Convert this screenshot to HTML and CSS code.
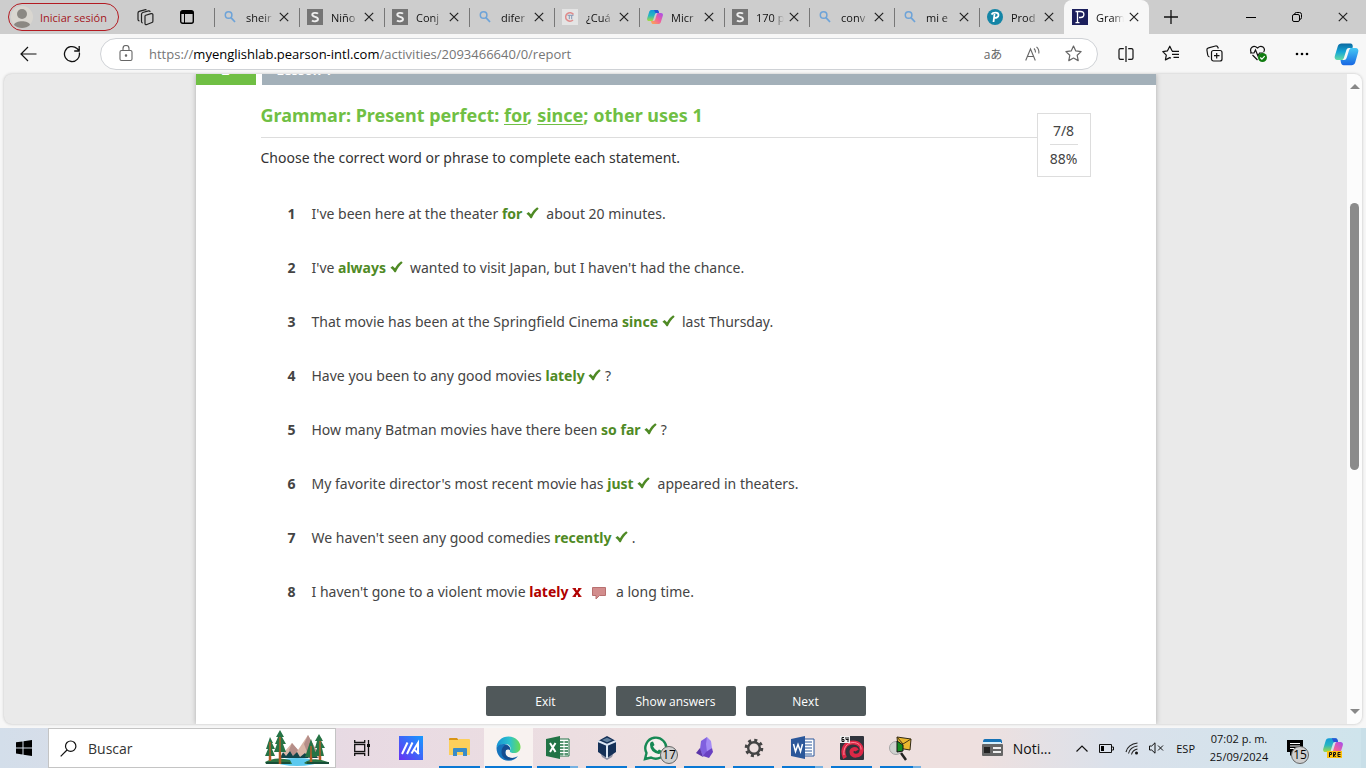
FILE: index.html
```html
<!DOCTYPE html>
<html lang="es">
<head>
<meta charset="utf-8">
<title>Grammar: Present perfect</title>
<link rel="stylesheet" href="styles.css">
</head>
<body>
<svg class="defs" aria-hidden="true">
  <symbol id="close" viewBox="0 0 10 10"><path d="M.8.8l8.4 8.4M9.2.8L.8 9.2" fill="none" stroke="#222" stroke-width="1.2"/></symbol>
  <symbol id="lens" viewBox="0 0 16 16"><circle cx="6.6" cy="6" r="3.3" fill="none" stroke="#6da3d8" stroke-width="1.5"/><path d="M9 8.6l4 4.4" stroke="#6da3d8" stroke-width="1.7"/></symbol>
  <symbol id="sbox" viewBox="0 0 16 16"><path d="M0 0h16v16H0z" fill="#757575"/><path d="M11 4.7C10 3.7 5.3 3.2 5.3 5.7 5.3 8.4 11 7.3 11 10.1 11 12.9 6.300 12.700 5 11.500" fill="none" stroke="#eee" stroke-width="1.9"/></symbol>
  <symbol id="check" viewBox="0 0 13 12"><path d="M.4 6.800L2.600 4.900 5 7.200C6.500 4.300 8.700 1.900 11.200.2L12.700 1.700C9.700 4.300 7.500 7.500 5.800 11.200H4.500C3.500 9.500 2.100 7.900.4 6.800z" fill="#4f8a25"/></symbol>
  <linearGradient id="cb" x1="0" y1="0" x2="0" y2="1"><stop offset="0" stop-color="#129bd8"/><stop offset=".5" stop-color="#27b5c2"/><stop offset="1" stop-color="#a8dc3d"/></linearGradient>
  <linearGradient id="cp" x1="1" y1="0" x2="0" y2="1"><stop offset="0" stop-color="#a44cf1"/><stop offset=".5" stop-color="#f0619a"/><stop offset="1" stop-color="#ffae4b"/></linearGradient>
  <symbol id="copilot" viewBox="0 0 16 16"><path d="M4.700 1h5.200c1.100 0 1.400.6 1.800 1.800L12 4H9.700C8.300 4 8 5 7.600 6.300L6.300 10.500C5.900 11.700 5.500 12 4.500 12H2C.4 12-.2 10.800.2 9.300L2.200 2.800C2.600 1.600 3.500 1 4.700 1z" fill="url(#cb)"/><path d="M7 1h3c1.100 0 1.400.6 1.800 1.800L12 4H8.500z" fill="#2855d6"/><path d="M11.300 15H6.100c-1.100 0-1.400-.6-1.800-1.800L4 12h2.300c1.400 0 1.700-1 2.100-2.300L9.700 5.500C10.100 4.300 10.500 4 11.500 4H14c1.600 0 2.200 1.200 1.800 2.700l-2 6.500c-.4 1.200-1.300 1.800-2.500 1.800z" fill="url(#cp)"/></symbol>
</svg>

<header class="tabstrip">
  <button class="signin">
    <svg width="24" height="24" viewBox="0 0 24 24"><circle cx="12" cy="12" r="11" fill="#d9d6d0"/><circle cx="12" cy="9" r="5" fill="#8b8883"/><path d="M4 20c1-5 15-5 16 0-4 4-12 4-16 0z" fill="#8b8883"/></svg>
    <span>Iniciar sesión</span>
  </button>
  <button class="ghost strip-btn" aria-label="Áreas de trabajo"><svg width="17" height="17" viewBox="0 0 17 17" fill="none" stroke="#222" stroke-width="1.200"><path d="M8 6.500l6-1.800q1.700-.4 1.900 1v6.500q0 1-1 1.300l-5 2q-1.900.6-1.900-1V6.500"/><path d="M5.800 14Q4.500 14 4.500 12.500V5.200Q4.500 4 5.800 3.500L11.500 1.900q1.500-.3 1.500 1.200"/><path d="M2.500 12Q1 11.800 1 10.500V4Q1 2.800 2.200 2.400L7.700.8Q9 .500 9.300 1.300"/></svg></button>
  <button class="ghost strip-btn second" aria-label="Pestañas verticales"><svg width="14" height="14" viewBox="0 0 14 14"><rect x=".7" y=".7" width="12.600" height="12.600" rx="2" fill="none" stroke="#000" stroke-width="1.400"/><path d="M1 1h12v3H1zM4 3h1v10H4z"/></svg></button>
  <nav class="tabs">
    <div class="tab"><svg class="fav"><use href="#lens"/></svg><a href="#">sheir</a><button aria-label="Cerrar"><svg><use href="#close"/></svg></button></div>
    <div class="tab"><svg class="fav"><use href="#sbox"/></svg><a href="#">Niño</a><button aria-label="Cerrar"><svg><use href="#close"/></svg></button></div>
    <div class="tab"><svg class="fav"><use href="#sbox"/></svg><a href="#">Conj</a><button aria-label="Cerrar"><svg><use href="#close"/></svg></button></div>
    <div class="tab"><svg class="fav"><use href="#lens"/></svg><a href="#">difer</a><button aria-label="Cerrar"><svg><use href="#close"/></svg></button></div>
    <div class="tab"><svg class="fav" viewBox="0 0 16 16"><path d="M0 0h16v16H0z" fill="#e4e4e4"/><path d="M11.500 5.500A4.300 4.300 0 1 0 11 11" fill="none" stroke="#df8a8a" stroke-width="1.500"/><path d="M5.500 6.300h6M7.300 6.500v3.700M9.700 6.500v3.700" stroke="#8497b5"/></svg><a href="#">¿Cuá</a><button aria-label="Cerrar"><svg><use href="#close"/></svg></button></div>
    <div class="tab"><svg class="fav"><use href="#copilot"/></svg><a href="#">Micr</a><button aria-label="Cerrar"><svg><use href="#close"/></svg></button></div>
    <div class="tab"><svg class="fav"><use href="#sbox"/></svg><a href="#">170 p</a><button aria-label="Cerrar"><svg><use href="#close"/></svg></button></div>
    <div class="tab"><svg class="fav"><use href="#lens"/></svg><a href="#">conv</a><button aria-label="Cerrar"><svg><use href="#close"/></svg></button></div>
    <div class="tab"><svg class="fav"><use href="#lens"/></svg><a href="#">mi e</a><button aria-label="Cerrar"><svg><use href="#close"/></svg></button></div>
    <div class="tab"><svg class="fav" viewBox="0 0 16 16"><circle cx="8" cy="8" r="8" fill="#1485a6"/><path d="M6.500 13l1-8M4.500 5.500C6 3 11.500 2.700 11.500 6c0 2.300-2.500 3.200-4.500 2.700" fill="none" stroke="#fff" stroke-width="1.800"/></svg><a href="#">Prod</a><button aria-label="Cerrar"><svg><use href="#close"/></svg></button></div>
    <div class="tab active"><svg class="fav" viewBox="0 0 16 16"><path d="M0 0h16v16H0z" fill="#1c1f5c"/><path d="M5.500 2v12M3.500 2.500h5c4.500 0 4.500 6 0 6H7M3.500 13.700h4" fill="none" stroke="#fff" stroke-width="1.300"/></svg><a href="#">Gram</a><button aria-label="Cerrar"><svg><use href="#close"/></svg></button></div>
  </nav>
  <button class="ghost newtab" aria-label="Nueva pestaña"><svg width="14" height="14"><path d="M7 0v14M0 7h14" stroke="#111" stroke-width="1.300"/></svg></button>
  <div class="winctl">
    <button class="ghost" aria-label="Minimizar"><svg width="10" height="10"><path d="M0 5.500h10" stroke="#000"/></svg></button>
    <button class="ghost" aria-label="Restaurar"><svg width="10" height="10" fill="none" stroke="#000"><rect x=".5" y="2.500" width="7" height="7" rx="1.500"/><path d="M2.500 2.300Q2.700.5 4.500.5H7.500Q9.500.5 9.500 2.500V5.500Q9.500 7.300 7.700 7.500"/></svg></button>
    <button class="ghost" aria-label="Cerrar ventana"><svg width="10" height="10"><use href="#close"/></svg></button>
  </div>
</header>

<div class="toolbar">
  <button class="ghost tool" aria-label="Atrás"><svg width="17" height="16" fill="none" stroke="#111" stroke-width="1.200"><path d="M1 8h15.500M8 1L1 8l7 7"/></svg></button>
  <button class="ghost tool" aria-label="Actualizar"><svg width="18" height="18" fill="none" stroke="#111" stroke-width="1.300"><path d="M16.300 7.500A7.500 7.500 0 1 1 14 3.500l2 2M16.200 1v5h-5"/></svg></button>
  <div class="address">
    <svg width="14" height="17" viewBox="0 0 14 17" fill="none" stroke="#666" stroke-width="1.100"><rect x="1" y="5.500" width="12" height="10" rx="1.500"/><path d="M4 5.500V3.500a3 3 0 0 1 6 0v2"/><circle cx="7" cy="10.500" r=".7" fill="#444"/></svg>
    <div class="url" role="textbox" contenteditable="true" aria-label="Dirección" spellcheck="false">https://<b>myenglishlab.pearson-intl.com</b>/activities/2093466640/0/report</div>
    <button class="ghost inner" aria-label="Traducir"><span class="translate">aあ</span></button>
    <button class="ghost inner" aria-label="Leer en voz alta"><svg width="16" height="16" fill="none" stroke="#666" stroke-width="1.100"><path d="M.7 14.500L5.500 3l4.800 11.500M2.300 10.500h6.300M9 2.500q1.600 1.500 1.500 4M11.500.8q3 2.700 2.300 6.700"/></svg></button>
    <button class="ghost inner" aria-label="Favorito"><svg width="17" height="17" viewBox="0 0 17 17" fill="none" stroke="#666" stroke-width="1.200" stroke-linejoin="round"><path d="M8.500 1l2.300 4.900 5.300.7-3.900 3.700 1 5.300-4.700-2.600-4.700 2.600 1-5.300L.9 6.600l5.300-.7z"/></svg></button>
  </div>
  <div class="extras">
    <button class="ghost" aria-label="Pantalla dividida"><svg width="16" height="16" fill="none" stroke="#111" stroke-width="1.200"><path d="M8 0v16M5.800 2.600H2.600Q1 2.600 1 4v8q0 1.400 1.600 1.400h3.200M10.200 2.600h3.200Q15 2.600 15 4v8q0 1.400-1.600 1.400h-3.200"/></svg></button>
    <button class="ghost" aria-label="Favoritos"><svg width="17" height="17" fill="none" stroke="#111" stroke-width="1.200" stroke-linejoin="round"><path d="M10.500 6L10 5.700 7.800 1.200 5.500 5.800.8 6.600l3.500 3.500-.9 4.800 4.400-2.300 1.100.6M10 6.300h7M10 9.300h7M11.500 12.300H17"/></svg></button>
    <button class="ghost" aria-label="Colecciones"><svg width="17" height="17" fill="none" stroke="#111" stroke-width="1.200"><rect x="5.500" y="5.500" width="10.500" height="10.500" rx="2"/><path d="M10.700 8v5.500M8 10.700h5.500M3.500 12Q2 11.600 1.700 10L.9 5Q.7 3.200 2.500 2.800L9.500 1Q11.300.7 12 2.500l.3 1"/></svg></button>
    <button class="ghost" aria-label="Rendimiento"><svg width="19" height="18" fill="none" stroke="#111" stroke-width="1.200"><path d="M2.400 8C-.2 3 4.500-.800 8.500 3 12.500-.8 17 3 14.700 7M1 8h4l1.500-3 2.500 6 1.500-3h4M3.500 10l5 5"/><circle cx="13.500" cy="12.500" r="4.500" fill="#107c10" stroke="none"/><path d="M11.300 12.500l1.600 1.700 2.800-3" stroke="#fff"/></svg></button>
    <button class="ghost" aria-label="Más"><svg width="14" height="4"><circle cx="2" cy="2" r="1.300"/><circle cx="7" cy="2" r="1.300"/><circle cx="12" cy="2" r="1.300"/></svg></button>
    <button class="ghost" aria-label="Copilot"><svg width="25" height="24" viewBox="0 0 16 16"><linearGradient id="ba" x1="0" y1="0" x2="0" y2="1"><stop offset="0" stop-color="#0a68a0"/><stop offset=".5" stop-color="#15a5d6"/><stop offset="1" stop-color="#66dba5"/></linearGradient><linearGradient id="bb" x1="0" y1="0" x2="0" y2="1"><stop offset="0" stop-color="#45c8f4"/><stop offset="1" stop-color="#1766e3"/></linearGradient><path d="M4.700 1h6c1 0 1.300.6 1.500 1.800L12 4H9.700C8.300 4 8 5 7.600 6.300L6.300 10.500C5.900 11.700 5.500 12 4.500 12H2C.4 12-.2 10.800.2 9.300L2.200 2.800C2.600 1.600 3.500 1 4.700 1z" fill="url(#ba)"/><path d="M11.300 15.500H6.100c-1.100 0-1.400-.6-1.800-1.800L4 12h2.300c1.400 0 1.700-1 2.100-2.300L9.700 5.500C10.100 4.300 10.500 4 11.500 4H14c1.600 0 2.200 1.200 1.800 2.700l-2 7c-.4 1.200-1.300 1.800-2.500 1.800z" fill="url(#bb)"/></svg></button>
  </div>
</div>

<div class="viewport">
  <div class="canvas">
    <main class="paper">
      <div class="banner"><span class="unit">2</span><span class="lesson">Lesson 1</span></div>
      <div class="content">
        <div class="title-row">
          <div class="title-text">
            <h1>Grammar: Present perfect: <u>for</u>, <u>since</u>; other uses 1</h1>
            <p class="instructions">Choose the correct word or phrase to complete each statement.</p>
          </div>
          <div class="score"><span>7/8</span><hr><span>88%</span></div>
        </div>
        <ol class="questions">
          <li><b class="num">1</b><p>I've been here at the theater <strong>for</strong> <svg class="tick"><use href="#check"/></svg>&nbsp; about 20 minutes.</p></li>
          <li><b class="num">2</b><p>I've <strong>always</strong> <svg class="tick"><use href="#check"/></svg>&nbsp; wanted to visit Japan, but I haven't had the chance.</p></li>
          <li><b class="num">3</b><p>That movie has been at the Springfield Cinema <strong>since</strong> <svg class="tick"><use href="#check"/></svg>&nbsp; last Thursday.</p></li>
          <li><b class="num">4</b><p>Have you been to any good movies <strong>lately</strong> <svg class="tick"><use href="#check"/></svg> ?</p></li>
          <li><b class="num">5</b><p>How many Batman movies have there been <strong>so far</strong> <svg class="tick"><use href="#check"/></svg> ?</p></li>
          <li><b class="num">6</b><p>My favorite director's most recent movie has <strong>just</strong> <svg class="tick"><use href="#check"/></svg>&nbsp; appeared in theaters.</p></li>
          <li><b class="num">7</b><p>We haven't seen any good comedies <strong>recently</strong> <svg class="tick"><use href="#check"/></svg> .</p></li>
          <li><b class="num">8</b><p>I haven't gone to a violent movie <strong class="wrong">lately</strong> <svg class="cross" viewBox="0 0 10 9"><path d="M2 .5l6 8M8 .5l-6 8" stroke="#b00000" stroke-width="2.200"/><path d="M.5.600H4M6 .6h3.500M.5 8.400H4M6 8.400h3.500" stroke="#b00000"/></svg> <svg class="note" viewBox="0 0 14 14"><path d="M.5 1.500h13v8H7.500L4 13V9.500H.5z" fill="#d28d8d" stroke="#b87070"/></svg>&nbsp; a long time.</p></li>
        </ol>
        <div class="actions"><button>Exit</button><button>Show answers</button><button>Next</button></div>
      </div>
    </main>
  </div>
  <div class="scrollbar" aria-hidden="true"><i class="up"></i><span class="before"></span><span class="thumb"></span><span class="after"></span><i class="down"></i></div>
</div>

<footer class="taskbar">
  <button class="ghost start" aria-label="Inicio"><svg width="16" height="16"><path d="M0 2.300l6.500-.9v6H0zM7.500 1.200L16 0v7.400H7.500zM0 8.500h6.500v6L0 13.600zM7.500 8.500H16V16l-8.500-1.200z"/></svg></button>
  <label class="search">
    <svg width="17" height="17" fill="none" stroke="#111" stroke-width="1.200"><circle cx="10.700" cy="6.200" r="5.200"/><path d="M7 10l-6.300 6.300"/></svg>
    <input type="text" placeholder="Buscar" aria-label="Buscar">
    <svg width="66" height="36" viewBox="0 0 66 36">
      <path d="M15 28L28 13l6 7 10-15 12 23z" fill="#d9b6a8"/><path d="M28 13l6 7-4 7-5-7zM44 5l10 18-8-4-3 3-3-8z" fill="#b58e89"/>
      <path d="M16 28l3-6 3 4 4-5 3 5 4-4 3 5 5-4 4 5 4-6 5 6z" fill="#12454b"/>
      <ellipse cx="33" cy="32" rx="20" ry="4" fill="#5bc9ef"/><path d="M1 32q10-6 25-2l2 4H2zM40 33q9-7 24-1l1 2H42z" fill="#2c7342"/><path d="M2 33h24M43 33h22" stroke="#174e38" stroke-width="2"/>
      <path d="M6 12v19M16 4v30M47 13v19M56 8v22" stroke="#b75b25" stroke-width="2.500"/>
      <path d="M6 7l3 6H8l3 6H8l3 7H1l3-7H2l2-6zM16 0l4 7h-2l4 7h-3l3 8H10l3-8h-2l3-7h-2zM47 9l6 18h-5l-1-4-1 4h-5zM55 4l4 7h-2l4 7h-3l2 8H50l3-8h-2l2-7h-2z" fill="#257345"/><path d="M6 12v19M16 7v27M47 16v16M56 11v19" stroke="#b75b25" stroke-width="1.400"/>
    </svg>
  </label>
  <nav class="apps">
    <button class="ghost" aria-label="Vista de tareas"><svg width="16" height="16" fill="none" stroke="#111" stroke-width="1.300"><path d="M.7 0v2.500h10V0M.7 16v-2.500h10V16M14.500 0v16"/><rect x=".7" y="4.500" width="10" height="7"/><path d="M13 4h3v3h-3z" fill="#111" stroke="none"/></svg></button>
    <button class="ghost" aria-label="MyASUS"><svg width="24" height="24"><linearGradient id="as" x1="0" y1="1" x2="1" y2="0"><stop offset="0" stop-color="#6830f2"/><stop offset="1" stop-color="#159aff"/></linearGradient><path d="M0 0h24v24H0z" fill="url(#as)"/><path d="M3 18L8.500 6.500M8 18l5.500-11.500M12.500 17.500L19 7v11M15.500 14l4.500 4" stroke="#fff" stroke-width="2" fill="none"/></svg></button>
    <button class="ghost open" aria-label="Explorador"><svg width="22" height="20"><path d="M0 1q0-1 1-1h7l2 2.500H0z" fill="#d99414"/><path d="M0 2h9l1-1h10q1 0 1 1v15H0z" fill="#fccf5b"/><path d="M4 18v-7q0-1 1-1h12q1 0 1 1v7h-4v-4H8v4z" fill="#398bc8"/></svg></button>
    <button class="ghost open current" aria-label="Edge"><svg width="25" height="25" viewBox="0 0 25 25"><linearGradient id="eg"><stop offset="0" stop-color="#1594d6"/><stop offset=".55" stop-color="#2cc2cd"/><stop offset="1" stop-color="#6bdc4f"/></linearGradient><path d="M.5 12C.5 5 6 .5 12.500.5 20 .5 24.500 6 24.500 11c0 4-3 6-6.500 6-3 0-5-1-4-3 1.500-3-.5-6-5-6-4 0-7 2-8.500 4z" fill="url(#eg)"/><path d="M.5 12C2 9 5 7.500 8.500 8c4 .500 6 3 5.500 6-3-2-6 1-4 5 2 3.500 8 4 12 1-2 3-5.500 4.700-9.500 4.700C5.500 24.700.5 19 .5 12z" fill="#1674bd"/><path d="M9 9c-4 3-5 9-1 13 3 3 9 2 13-1-4 2-9 1-11-2-2-4 1-7 4-5 .5-3-2-5-5-5z" fill="#154d91"/></svg></button>
    <button class="ghost open multi" aria-label="Excel"><svg width="24" height="24"><path d="M12 3h11v17H12z" fill="#fff" stroke="#217346"/><path d="M14 6h8M14 9h8M14 12h8M14 15h8M14 18h8" stroke="#217346" stroke-width="1.500"/><path d="M18 4v16" stroke="#fff"/><path d="M0 3l14-3v23L0 20z" fill="#217346"/><path d="M4 7l5.500 9M9.500 7L4 16" stroke="#fff" stroke-width="2"/></svg></button>
    <button class="ghost open" aria-label="VirtualBox"><svg width="22" height="24"><path d="M4 16h14l-2 5-5 3-5-3z" fill="#8e93a5"/><path d="M11 0l9 5v11l-9 6-9-6V5z" fill="#153158"/><path d="M2 5l9 4 9-4M11 9v13" stroke="#dce7f5" stroke-width="2" fill="none"/><path d="M6 4l5-2.300L16 4l-5 2.300z" fill="#62819f"/></svg></button>
    <button class="ghost open" aria-label="WhatsApp"><svg width="25" height="25" viewBox="0 0 25 25"><path d="M2 23l1.500-6A10.500 10.500 0 1 1 8 21.500z" fill="#f5efed" stroke="#168954" stroke-width="2.400"/><path d="M8 6l2-.5L11.500 9 10 10.500q1.500 3 4.500 4.500l1.500-1.500 3 1.500q-.500 3-3.500 3Q7 16 7 8.500q0-2 1-2.500z" fill="#168954"/></svg><span class="badge">17</span></button>
    <button class="ghost open" aria-label="Obsidian"><svg width="18" height="22"><path d="M11 0l4 4 1 7-5 5-4-5z" fill="#a48bf5"/><path d="M11 0L5 4 4 12l3 8 4-5-1-8z" fill="#8060df"/><path d="M4 11L0 16l7 4z" fill="#5b35a8"/><path d="M10 15l6-4 1 4-4 6-6-2z" fill="#6940c2"/></svg></button>
    <button class="ghost open" aria-label="Configuración"><svg width="20" height="20"><circle cx="10" cy="10" r="5.800" fill="none" stroke="#444" stroke-width="2.400"/><circle cx="10" cy="10" r="7.800" fill="none" stroke="#444" stroke-width="3" stroke-dasharray="3 3.126"/></svg></button>
    <button class="ghost open multi" aria-label="Word"><svg width="24" height="24"><path d="M12 3h11v17H12z" fill="#fff" stroke="#2b579a"/><path d="M14 6h7M14 9h7M14 12h7M14 15h7M14 18h7" stroke="#2b579a"/><path d="M0 3l14-3v23L0 20z" fill="#2b579a"/><path d="M2.500 8l2 7.500L7 8.500l2.500 7L11.500 8" stroke="#fff" stroke-width="1.500" fill="none"/></svg></button>
    <button class="ghost open" aria-label="Aplicación de 64 bits"><svg width="24" height="24"><rect width="24" height="24" rx="1" fill="#30343c"/><path d="M5 22C1 14 5 6.500 13 6.500c6 0 9.500 4 8.500 8.500-1 6-10 6-10 1 0-3 4-4 5.500-1.500" fill="none" stroke="#dc2846" stroke-width="4"/><path d="M4 19C3 12 7 6.500 13 6.500c5 0 8.500 3 8 7" fill="none" stroke="#ff8799"/><path d="M0 0h10v7H0z" fill="#eee"/><path d="M4 1.500H2v4h2v-2H2M6 1v2.500h2.500M8 1v5" fill="none" stroke="#111"/></svg></button>
    <button class="ghost open multi" aria-label="Buscador"><svg width="24" height="25"><path d="M8 1l14 2-1 11-12-2z" fill="#e9b72f" stroke="#322b15"/><path d="M8 1l6 7 8-5" fill="none" stroke="#453714"/><circle cx="7" cy="12" r="6.500" fill="#cfd2cf" stroke="#a5a5a5"/><path d="M8 5l6 4v6l-6 1z" fill="#168c22" stroke="#111"/><path d="M12 17l5 7" stroke="#222" stroke-width="2.500"/></svg></button>
  </nav>
  <button class="ghost news"><svg width="22" height="18"><path d="M3 0h15q2 0 2 3v1H1V3q0-3 2-3z" fill="#1672b5"/><path d="M1 3h18v2H1z" fill="#d4effc"/><rect y="5" width="21" height="12" rx="1" fill="#666"/><path d="M2 8h6v6H2z" fill="#222"/><path d="M11 9h8M11 13h8" stroke="#eee" stroke-width="2"/></svg><span>Noti...</span></button>
  <div class="tray">
    <svg width="12" height="7"><path d="M.5 6.500L6 1l5.500 5.500" fill="none" stroke="#111" stroke-width="1.200"/></svg>
    <svg width="15" height="9"><path d="M.5.5h12v8H.5zM13 3h1.500v3H13" fill="none" stroke="#111"/><path d="M2 2h3v5H2z"/></svg>
    <svg width="13" height="13" fill="none" stroke="#222" stroke-width="1.100"><path d="M1 10Q3 2 12.500 1M3.500 11.500Q5 5 12.500 4M6.500 12.500Q7.500 8 12.500 7"/><circle cx="11.500" cy="11" r="1.500" fill="#111" stroke="none"/></svg>
    <svg width="15" height="12" fill="none" stroke="#111"><path d="M.5 4h2.200L6 .8v10.400L2.700 8H.5zM9 3.500l5 5M14 3.500l-5 5"/></svg>
  </div>
  <span class="lang">ESP</span>
  <time class="clock"><span>07:02 p. m.</span><span>25/09/2024</span></time>
  <button class="ghost notif" aria-label="Notificaciones"><svg width="16" height="16"><path d="M0 0h16v12H7l-4 4v-4H0z"/><path d="M3 3.500h10M3 6h10M3 8.500h7" stroke="#fff"/></svg><span class="badge">15</span></button>
  <button class="ghost pilot" aria-label="Copilot"><svg width="22" height="21" viewBox="0 0 22 21"><use href="#copilot" x="1" y="-1" width="20" height="20"/><rect x="5" y="13" width="15" height="7" fill="#ffc20e"/><path d="M7.500 19v-4.500h2v2h-2M11.500 19v-4.500h2v2h-2l2 2.500M18.500 14.500h-2.500v4h2.500M16 16.500h2.500" fill="none" stroke="#111"/></svg></button>
</footer>
</body>
</html>
```
FILE: styles.css
```css
* { box-sizing: border-box; }
body {
  margin: 0;
  height: 100vh;
  display: flex;
  flex-direction: column;
  overflow: hidden;
  background: #f7f7f7;
  color: #111;
  font: 11px "Open Sans", "Noto Sans", sans-serif;
}
button { font: inherit; color: inherit; cursor: pointer; }
svg { display: block; flex: none; }
.defs { position: absolute; width: 0; height: 0; }
.ghost {
  display: flex;
  align-items: center;
  justify-content: center;
  padding: 0;
  border: 0;
  background: none;
}

/* Tab strip */
.tabstrip { display: flex; height: 34px; flex: none; background: #cdcdcd; }
.signin {
  display: flex;
  align-items: center;
  gap: 6px;
  width: 111px;
  height: 28px;
  margin: 3px 0 0 8px;
  padding: 0 0 0 1px;
  border: 1px solid #b31b22;
  border-radius: 14px;
  background: none;
  color: #a4151c;
  white-space: nowrap;
}
.strip-btn { width: 42px; margin-left: 5px; }
.strip-btn.second { margin-left: 0; }
.tabs { display: flex; margin-left: 6px; }
.tab {
  display: flex;
  align-items: center;
  width: 85px;
  padding-left: 8px;
  background: linear-gradient(#777, #777) 0 8px / 1px 19px no-repeat;
}
.fav { width: 16px; height: 16px; }
.tab a {
  width: 28px;
  margin-left: 8px;
  overflow: hidden;
  color: #111;
  text-decoration: none;
  white-space: nowrap;
  mask-image: linear-gradient(90deg, #000 60%, transparent);
}
.tab button { margin-left: 5px; padding: 0; border: 0; background: none; }
.tab button svg { width: 10px; height: 10px; }
.tab.active { border-radius: 8px 8px 0 0; background: #f7f7f7; }
.newtab { width: 44px; }
.winctl { display: flex; margin-left: auto; }
.winctl button { width: 46px; }

/* Toolbar */
.toolbar { display: flex; align-items: center; height: 39px; flex: none; }
.tool { width: 44px; height: 32px; }
.tool:first-child { margin-left: 6px; }
.address {
  display: flex;
  align-items: center;
  flex: 1;
  height: 32px;
  margin-left: 6px;
  padding: 0 4px 0 18px;
  border: 1px solid #cfd2d6;
  border-radius: 16px;
  background: #fff;
}
.url {
  flex: 1;
  margin-left: 16px;
  color: #767676;
  font-size: 13px;
  line-height: 18px;
  white-space: nowrap;
  outline: 0;
}
.url b { color: #000; font-weight: 400; }
.inner { width: 40px; height: 30px; }
.translate { color: #666; font: 12px "Open Sans", "Noto Sans CJK JP", sans-serif; }
.extras { display: flex; margin: 0 -2px 0 6px; }
.extras button { width: 44px; height: 32px; }

/* Page viewport */
.viewport {
  display: flex;
  flex: 1;
  min-height: 0;
  margin: 1px 4px 4px;
  overflow: hidden;
  border-radius: 8px;
  background: #eaeaea;
  box-shadow: 0 0 3px #bbb;
}
.canvas { flex: 1; overflow: hidden; }
.paper {
  max-width: 960px;
  min-height: 100%;
  margin: 0 auto;
  background: #fff;
  box-shadow: 0 0 5px #aaa;
  color: #444;
  font: 14px/20px "Noto Sans", "Open Sans", sans-serif;
  overflow: hidden;
}
.banner {
  display: flex;
  gap: 6px;
  height: 31px;
  margin-top: -20px;
  color: #fff;
  font-weight: 700;
  line-height: 32px;
}
.unit { width: 60px; background: #70bf44; text-align: center; font-size: 14px; }
.lesson { flex: 1; padding-left: 15px; background: #a3b0b9; font-size: 13px; }
.content { padding: 0 65px; }
.title-row { display: flex; padding-top: 17px; }
.title-text { flex: 1; }
h1 {
  margin: 0;
  padding-bottom: 9px;
  border-bottom: 1px solid #ddd;
  color: #70bf44;
  font-size: 18px;
  line-height: 26px;
}
h1 u { text-decoration-thickness: 1px; text-underline-offset: 2px; }
.instructions { margin: 10px 0 0; color: #333; }
.score {
  display: flex;
  flex-direction: column;
  justify-content: center;
  width: 54px;
  height: 64px;
  margin-top: 11px;
  border: 1px solid #ddd;
  text-align: center;
}
.score hr { width: 28px; margin: 3px auto 4px; border: 0; border-top: 1px solid #ddd; }
.questions { margin: 10px 0 0 27px; padding: 0; list-style: none; }
.questions li { display: flex; align-items: center; height: 54px; }
.questions p { margin: 0; }
.num { width: 24px; }
.questions strong { color: #4f8a25; }
.questions strong.wrong { color: #b00000; }
.questions svg { display: inline-block; }
.tick { width: 13px; height: 12px; }
.cross { width: 10px; height: 9px; }
.note { width: 14px; height: 14px; margin: 0 3px 0 6px; vertical-align: -3px; }
.actions { display: flex; justify-content: center; gap: 10px; margin-top: 67px; }
.actions button {
  width: 120px;
  height: 30px;
  border: 0;
  border-radius: 2px;
  background: #50585a;
  color: #fff;
  font: 500 12px "Open Sans", sans-serif;
}

/* Scrollbar */
.scrollbar {
  display: flex;
  flex-direction: column;
  align-items: center;
  width: 15px;
  padding: 10px 0 10px;
  background: #fcfcfc;
}
.up, .down { border: 5px solid transparent; }
.up { border-top: 0; border-bottom-color: #888; }
.down { border-bottom: 0; border-top-color: #888; }
.before { flex: 114; }
.thumb { flex: 268; width: 9px; border-radius: 5px; background: #8b8b8b; }
.after { flex: 239; }

/* Taskbar */
.taskbar {
  display: flex;
  height: 40px;
  flex: none;
  border-right: 5px solid #c9dfe8;
  background: linear-gradient(90deg, #d3deea, #e8dae3 26%, #eee0e0 50%, #eee0df 72%, #dae1eb 82%, #cfe4ec);
}
.start { width: 48px; }
.search {
  display: flex;
  align-items: center;
  width: 288px;
  padding: 0 5px 0 11px;
  border: 1px solid #c4c4c4;
  background: #fff;
}
.search input {
  flex: 1;
  min-width: 0;
  margin-left: 11px;
  padding: 0;
  border: 0;
  outline: 0;
  background: none;
  font: 14px "Open Sans", sans-serif;
}
.search input::placeholder { color: #333; opacity: 1; }
.apps { display: flex; margin-left: 1px; }
.apps button { position: relative; width: 49px; border: solid transparent; border-width: 0 4px; }
.apps .open { background: linear-gradient(#0a78d4, #0a78d4) 0 100% / 100% 2px no-repeat padding-box; background-clip: padding-box; }
.apps .current { border-width: 0 1px; background: linear-gradient(#0a78d4, #0a78d4) 0 100% / 100% 2px no-repeat, #f8f2f0; }
.apps .multi { background: linear-gradient(90deg, #0a78d4 80%, #75b1e2 80%) 0 100% / 100% 2px no-repeat padding-box; background-clip: padding-box; }
.badge {
  position: absolute;
  display: grid;
  place-items: center;
  width: 18px;
  height: 18px;
  right: -2px;
  bottom: 4px;
  border: 1px solid #666;
  border-radius: 50%;
  background: #cfcfcf;
  color: #000;
  font-size: 12px;
  line-height: 16px;
}
.news { gap: 9px; margin-left: auto; font-size: 14px; }
.tray { display: flex; align-items: center; gap: 11px; margin-left: 25px; }
.lang { margin: auto 0 auto 12px; }
.clock {
  display: flex;
  flex-direction: column;
  justify-content: center;
  width: 60px;
  margin-left: 14px;
  line-height: 18px;
  text-align: center;
  white-space: nowrap;
}
.notif { position: relative; width: 24px; margin-left: 14px; }
.pilot { margin: 0 17px 0 15px; }
```
